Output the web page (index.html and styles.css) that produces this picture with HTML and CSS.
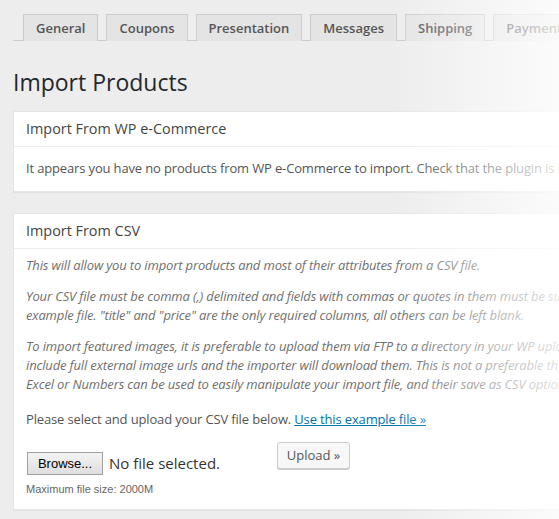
FILE: index.html
```html
<!DOCTYPE html>
<html>
<head>
<meta charset="utf-8">
<link rel="stylesheet" href="styles.css">
</head>
<body>
<div class="wrap">
  <nav class="tabs">
    <span class="tab">General</span>
    <span class="tab">Coupons</span>
    <span class="tab">Presentation</span>
    <span class="tab">Messages</span>
    <span class="tab">Shipping</span>
    <span class="tab">Payment</span>
    <span class="tab">Checkout</span>
  </nav>
  <h1 class="title">Import Products</h1>

  <section class="box">
    <h3 class="box-head">Import From WP e-Commerce</h3>
    <div class="box-body">
      <p class="text first">It appears you have no products from WP e-Commerce to import. Check that the plugin is installed and active.</p>
    </div>
  </section>

  <section class="box">
    <h3 class="box-head">Import From CSV</h3>
    <div class="box-body csv">
      <p class="desc lead">This will allow you to import products and most of their attributes from a CSV file.</p>
      <p class="desc">Your CSV file must be comma (,) delimited and fields with commas or quotes in them must be surrounded by quotes, see the<br>example file. "title" and "price" are the only required columns, all others can be left blank.</p>
      <p class="desc">To import featured images, it is preferable to upload them via FTP to a directory in your WP uploads folder and then<br>include full external image urls and the importer will download them. This is not a preferable thing to do with<br>Excel or Numbers can be used to easily manipulate your import file, and their save as CSV option works well.</p>
      <p class="text select">Please select and upload your CSV file below. <a class="link" href="#">Use this example file »</a></p>
      <div class="upload-row">
        <div class="file-col">
          <div class="file">
            <span class="browse">Browse...</span>
            <span class="nofile">No file selected.</span>
          </div>
          <div class="maxsize">Maximum file size: 2000M</div>
        </div>
        <span class="button">Upload »</span>
      </div>
    </div>
  </section>
</div>
<div class="fade"></div>
</body>
</html>
```
FILE: styles.css
```css
html, body {
  margin: 0;
  padding: 0;
  background: #ededed;
  overflow: hidden;
}
body {
  font-family: "Open Sans", sans-serif;
  color: #444;
  width: 559px;
  height: 519px;
  position: relative;
}
.wrap {
  padding: 14px 0 0 13px;
  width: 800px;
}
.tabs {
  display: flex;
  border-bottom: 1px solid #ccc;
  padding-left: 2px;
  height: 26px;
  white-space: nowrap;
}
.tab {
  display: block;
  margin-left: 8px;
  border: 1px solid #ccc;
  border-bottom: none;
  background: #e4e4e4;
  color: #555;
  font-size: 13px;
  font-weight: 600;
  line-height: 24px;
  padding: 1px 12px 1px;
  box-sizing: border-box;
  height: 27px;
}
.title {
  font-size: 23px;
  font-weight: 400;
  color: #23282d;
  margin: 27px 0 0;
  line-height: 29px;
  padding: 0;
}
.box {
  background: #fff;
  border: 1px solid #e5e5e5;
  box-shadow: 0 1px 1px rgba(0,0,0,0.04);
  margin-top: 14px;
}
.box + .box {
  margin-top: 21px;
}
.box-head {
  margin: 0;
  font-size: 14.4px;
  font-weight: 400;
  line-height: 19px;
  padding: 7px 12px 8px;
  color: #444;
  border-bottom: 1px solid #eee;
}
.box-body {
  padding: 12px 12px 12px;
}
.box-body.csv {
  padding: 7px 12px 13px;
}
.text, .desc {
  font-size: 13px;
  margin: 12px 0 0;
}
.text {
  line-height: 19.5px;
  color: #555;
  letter-spacing: -0.15px;
}
.desc {
  line-height: 19px;
  font-style: italic;
  color: #6f6f6f;
  letter-spacing: -0.15px;
}
.desc.lead, .text.first { margin-top: 0; }
.text.select { margin-top: 16px; line-height: 19px; }
.link {
  color: #0073aa;
  text-decoration: underline;
}
.upload-row {
  display: flex;
  align-items: flex-start;
  margin-top: 13px;
}
.file-col {
  display: flex;
  flex-direction: column;
  margin-top: 10px;
  width: 251px;
}
.file {
  display: flex;
  align-items: center;
  gap: 6px;
  height: 23px;
}
.browse {
  display: block;
  box-sizing: border-box;
  width: 76px;
  height: 23px;
  border: 1px solid #a0a0a0;
  background: linear-gradient(#f4f4f4, #dedede);
  color: #000;
  font-family: "Liberation Sans", sans-serif;
  font-size: 13px;
  line-height: 21px;
  text-align: center;
  margin-left: 1px;
}
.nofile {
  font-size: 15px;
  color: #333;
}
.maxsize {
  font-family: "Liberation Sans", sans-serif;
  font-size: 11px;
  line-height: 13px;
  color: #666;
  margin-top: 8px;
}
.button {
  display: block;
  box-sizing: border-box;
  height: 27px;
  width: 73px;
  text-align: center;
  background: #f7f7f7;
  border: 1px solid #ccc;
  border-radius: 3px;
  box-shadow: 0 1px 0 #ccc;
  color: #555;
  font-size: 13px;
  line-height: 25px;
}
.fade {
  position: absolute;
  top: 0;
  left: 390px;
  width: 169px;
  height: 519px;
  background: linear-gradient(to right, rgba(255,255,255,0), rgba(255,255,255,0.8));
  pointer-events: none;
}
```
